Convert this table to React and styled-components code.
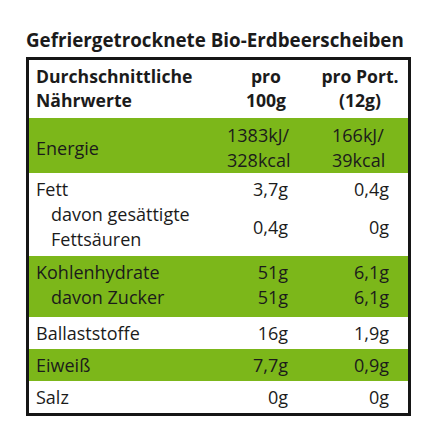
import React from 'react';
import styled, { createGlobalStyle } from 'styled-components';

const GlobalStyle = createGlobalStyle`
  html, body {
    margin: 0;
    padding: 0;
    background: #ffffff;
  }
  body {
    font-family: 'Open Sans', 'Noto Sans', sans-serif;
    color: #1b1b1b;
  }
`;

const Page = styled.div`
  width: 440px;
  height: 440px;
  padding: 28px 0 0 26px;
  box-sizing: border-box;
`;

const Title = styled.h1`
  margin: 0 0 5px;
  font-size: 18.8px;
  line-height: 24px;
  font-weight: 700;
  color: #1b1b1b;
  letter-spacing: 0;
`;

const Table = styled.div`
  width: 385px;
  border: 3px solid #161616;
  box-sizing: border-box;
`;

const Section = styled.div`
  background: ${(props) => (props.$green ? '#7cb71a' : '#ffffff')};
  padding: ${(props) => props.$pad || '4px 0 3px'};
`;

const Row = styled.div`
  display: grid;
  grid-template-columns: 193px 88px 1fr;
  align-items: center;
  font-size: 18px;
  line-height: 25px;
`;

const HeadRow = styled(Row)`
  font-weight: 700;
  font-size: 17.6px;
  line-height: 24px;
`;

const Label = styled.div`
  padding-left: ${(props) => (props.$sub ? '22px' : '7px')};
`;

const HeadCell = styled.div`
  text-align: center;
  padding-left: ${(props) => props.$shift || '0'};
`;

const Value = styled.div`
  text-align: right;
  padding-right: ${(props) => props.$pr || '22px'};
`;

const EnergyValue = styled.div`
  padding-left: ${(props) => props.$pl};
`;

const data = [
  {
    green: false,
    pad: '4px 0 4px',
    rows: [
      { label: 'Fett', a: '3,7g', b: '0,4g' },
      { label: 'davon gesättigte Fettsäuren', sub: true, a: '0,4g', b: '0g' },
    ],
  },
  {
    green: true,
    pad: '4px 0 7px',
    rows: [
      { label: 'Kohlenhydrate', a: '51g', b: '6,1g' },
      { label: 'davon Zucker', sub: true, a: '51g', b: '6,1g' },
    ],
  },
  { green: false, rows: [{ label: 'Ballaststoffe', a: '16g', b: '1,9g' }] },
  { green: true, rows: [{ label: 'Eiweiß', a: '7,7g', b: '0,9g' }] },
  { green: false, rows: [{ label: 'Salz', a: '0g', b: '0g' }] },
];

export default function App() {
  return (
    <>
      <GlobalStyle />
      <Page>
        <Title>Gefriergetrocknete Bio-Erdbeerscheiben</Title>
        <Table>
          <Section $pad="4px 0 6px">
            <HeadRow>
              <Label>
                Durchschnittliche
                <br />
                Nährwerte
              </Label>
              <HeadCell>
                pro
                <br />
                100g
              </HeadCell>
              <HeadCell $shift="2px">
                pro Port.
                <br />
                (12g)
              </HeadCell>
            </HeadRow>
          </Section>

          <Section $green $pad="5px 0 0">
            <Row>
              <Label>Energie</Label>
              <EnergyValue $pl="5px">
                1383kJ/
                <br />
                328kcal
              </EnergyValue>
              <EnergyValue $pl="22px">
                166kJ/
                <br />
                39kcal
              </EnergyValue>
            </Row>
          </Section>

          {data.map((group, i) => (
            <Section key={i} $green={group.green} $pad={group.pad}>
              {group.rows.map((row) => (
                <Row key={row.label}>
                  <Label $sub={row.sub}>{row.label}</Label>
                  <Value>{row.a}</Value>
                  <Value $pr="19px">{row.b}</Value>
                </Row>
              ))}
            </Section>
          ))}
        </Table>
      </Page>
    </>
  );
}
